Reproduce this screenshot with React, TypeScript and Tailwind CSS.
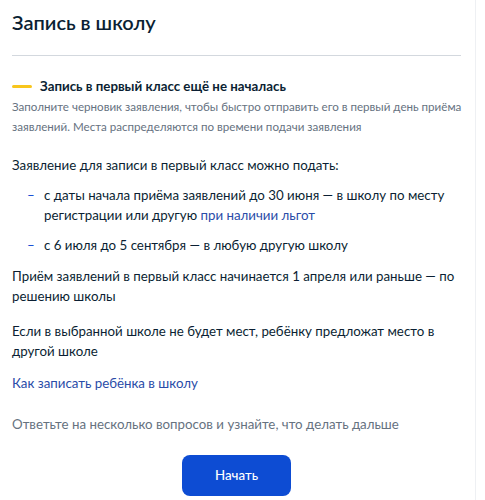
import React from "react";

export default function App() {
  return (
    <div className="w-[485px] h-[500px] bg-white overflow-hidden flex" style={{ fontFamily: "Lato, 'Noto Sans', sans-serif" }}>
      <div className="w-[476px] border-r border-[#eef0f3] pl-3 pr-[14px] pt-2 text-[#0b1f33]">
        <h1 className="text-[20px] leading-[28px] font-semibold">Запись в школу</h1>
        <div className="mt-[19px] h-px bg-[#d3d8de]" />
        <div className="mt-5 flex items-center h-5">
          <span className="w-5 h-[3px] rounded-full bg-[#f8c61d]" />
          <span className="ml-2 text-[13.3px] font-bold leading-5">Запись в первый класс ещё не началась</span>
        </div>
        <p className="mt-px -mr-3 text-[11.6px] leading-5 text-[#66727f]">
          Заполните черновик заявления, чтобы быстро отправить его в первый день приёма заявлений. Места распределяются по времени подачи заявления
        </p>
        <p className="mt-[18px] text-[13.3px] leading-5">Заявление для записи в первый класс можно подать:</p>
        <ul className="mt-[10px] flex flex-col gap-[10px] text-[13.3px] leading-5">
          <li className="flex">
            <span className="w-8 pl-[15px] text-[#0d4cd3]">–</span>
            <p className="flex-1">
              с даты начала приёма заявлений до 30 июня — в школу по месту регистрации или другую{" "}
              <span className="text-[#2a4ca8]">при наличии льгот</span>
            </p>
          </li>
          <li className="flex">
            <span className="w-8 pl-[15px] text-[#0d4cd3]">–</span>
            <p className="flex-1">с 6 июля до 5 сентября — в любую другую школу</p>
          </li>
        </ul>
        <p className="mt-[11px] text-[13.3px] leading-5">
          Приём заявлений в первый класс начинается 1 апреля или раньше — по решению школы
        </p>
        <p className="mt-[15px] text-[13.3px] leading-5">
          Если в выбранной школе не будет мест, ребёнку предложат место в другой школе
        </p>
        <p className="mt-3 text-[13.3px] leading-5 text-[#2a4ca8]">Как записать ребёнка в школу</p>
        <p className="mt-[21px] text-[13.3px] leading-5 text-[#66727f]">Ответьте на несколько вопросов и узнайте, что делать дальше</p>
        <div className="mt-[21px] flex justify-center">
          <button className="w-[109px] h-[41px] rounded-lg bg-[#0d4cd3] text-white text-[13.3px] font-medium">Начать</button>
        </div>
      </div>
    </div>
  );
}
